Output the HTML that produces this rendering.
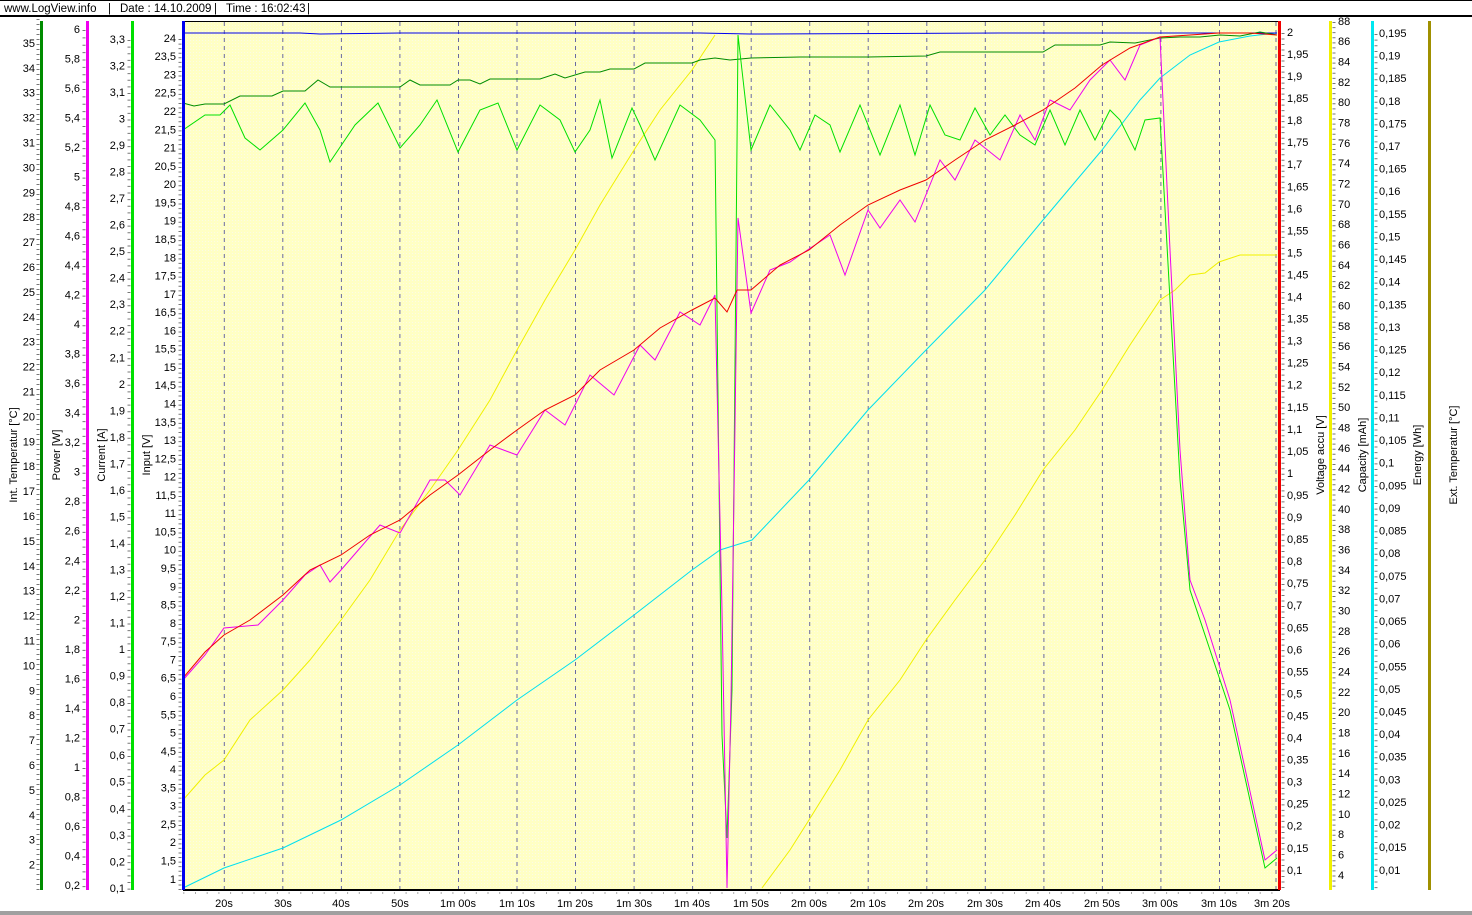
<!DOCTYPE html>
<html><head><meta charset="utf-8"><style>
html,body{margin:0;padding:0;background:#fff;width:1472px;height:915px;overflow:hidden}
svg{display:block;font-family:"Liberation Sans",Arial,sans-serif;font-size:11px}
</style></head><body>
<svg width="1472" height="915" viewBox="0 0 1472 915" xmlns="http://www.w3.org/2000/svg">
<defs>
<pattern id="dots" width="3" height="3" patternUnits="userSpaceOnUse">
<rect width="3" height="3" fill="#ffffc4"/><rect x="1" y="1" width="1" height="1" fill="#fbfbe6"/>
</pattern>
</defs>
<rect x="0" y="0" width="1472" height="1" fill="#000"/>
<g font-size="11.5">
<text x="4" y="12">www.LogView.info</text><text x="108" y="12">|</text><text x="120" y="12">Date : 14.10.2009</text><text x="214" y="12">|</text><text x="226" y="12">Time : 16:02:43</text><text x="307" y="12">|</text>
</g>
<rect x="0" y="15" width="1472" height="2" fill="#000"/>
<rect x="0" y="911" width="1472" height="4" fill="#a0a0a0"/>
<rect x="183" y="21" width="1097" height="869" fill="url(#dots)"/>
<line x1="183" y1="21.5" x2="1280" y2="21.5" stroke="#000"/>
<g stroke="#6a6aa0" stroke-dasharray="4,4" stroke-width="1">
<line x1="224.3" y1="22" x2="224.3" y2="890"/><line x1="282.8" y1="22" x2="282.8" y2="890"/><line x1="341.4" y1="22" x2="341.4" y2="890"/><line x1="399.9" y1="22" x2="399.9" y2="890"/><line x1="458.5" y1="22" x2="458.5" y2="890"/><line x1="517" y1="22" x2="517" y2="890"/><line x1="575.5" y1="22" x2="575.5" y2="890"/><line x1="634.1" y1="22" x2="634.1" y2="890"/><line x1="692.6" y1="22" x2="692.6" y2="890"/><line x1="751.2" y1="22" x2="751.2" y2="890"/><line x1="809.7" y1="22" x2="809.7" y2="890"/><line x1="868.2" y1="22" x2="868.2" y2="890"/><line x1="926.8" y1="22" x2="926.8" y2="890"/><line x1="985.3" y1="22" x2="985.3" y2="890"/><line x1="1043.9" y1="22" x2="1043.9" y2="890"/><line x1="1102.4" y1="22" x2="1102.4" y2="890"/><line x1="1160.9" y1="22" x2="1160.9" y2="890"/><line x1="1219.5" y1="22" x2="1219.5" y2="890"/><line x1="1276" y1="22" x2="1276" y2="890"/>
</g>
<g fill="none" stroke-width="1">
<polyline stroke="#00e0f0" points="183,888 224,868 283,848 341,820 400,785 458,745 517,700 575,660 634,615 692,570 720,550 752,540 809,480 868,410 926,350 985,290 1043,220 1102,150 1140,100 1160,78 1190,55 1219,42 1250,36 1277,33"/>
<polyline stroke="#f0f000" points="183,800 205,775 224,760 250,720 283,690 310,660 341,620 370,580 400,530 430,490 458,450 490,400 517,350 545,300 575,250 600,205 634,150 660,110 692,70 715,35"/>
<polyline stroke="#f0f000" points="762,888 790,850 809,820 840,770 868,720 900,680 926,640 955,600 985,560 1015,515 1043,470 1075,430 1102,390 1130,345 1160,300 1175,290 1190,275 1205,273 1219,262 1240,255 1277,255"/>
<polyline stroke="#0000f0" points="183,33 300,33 320,34 400,33 700,33 750,34 1000,33 1277,33"/>
<polyline stroke="#008c00" points="183,103 194,106 205,104 224,104 240,96 272,96 283,91 305,91 318,80 330,87 400,87 410,80 420,85 450,85 458,80 470,80 480,84 490,79 540,79 555,74 565,78 585,72 600,72 610,69 634,69 645,63 692,63 700,60 715,58 730,60 751,58 800,57 868,57 926,56 940,52 1043,52 1055,45 1100,45 1110,42 1135,43 1160,38 1180,37 1200,37 1220,35 1240,36 1260,32 1277,35"/>
<polyline stroke="#00e000" points="183,130 205,115 220,115 230,105 245,138 260,150 283,130 305,103 320,130 330,162 355,125 378,103 400,148 420,125 437,100 458,152 480,110 498,103 517,150 540,105 560,120 575,152 590,130 600,100 612,158 632,108 640,125 655,160 680,105 700,120 715,140 722,735 727,838 732,690 738,35 751,150 770,105 790,130 800,150 815,115 830,125 840,152 860,105 880,155 900,105 915,155 930,105 945,135 960,140 975,108 990,135 1005,115 1020,135 1035,145 1050,110 1065,145 1080,110 1095,140 1110,110 1120,120 1135,150 1145,120 1160,118 1170,300 1180,480 1190,590 1210,650 1230,710 1265,868 1277,858"/>
<polyline stroke="#f000f0" points="183,680 205,655 224,628 258,625 283,600 305,575 320,565 330,582 341,570 380,525 400,533 430,480 445,480 460,495 490,445 517,455 545,410 565,425 590,375 614,395 640,345 655,360 680,312 700,325 715,295 722,610 727,888 731,700 738,218 751,313 770,270 790,262 800,255 830,235 845,275 868,210 880,228 900,200 915,222 940,160 955,180 975,140 1000,160 1020,115 1035,140 1050,100 1070,110 1090,80 1110,60 1125,80 1140,45 1160,37 1170,250 1180,450 1190,580 1205,620 1230,700 1265,860 1277,850"/>
<polyline stroke="#f00000" points="183,678 205,652 224,635 250,620 283,595 310,570 341,555 370,535 400,520 430,495 458,475 490,450 517,430 545,410 575,395 600,370 634,350 660,328 692,310 715,298 727,312 737,290 751,290 780,265 809,250 840,225 868,205 900,190 926,180 955,160 985,140 1015,125 1043,110 1075,88 1102,65 1130,48 1160,37 1190,35 1219,33 1250,33 1277,35"/>
</g>
<rect x="183" y="889" width="1097" height="2" fill="#000"/>
<line x1="183" y1="893" x2="1280" y2="893" stroke="#555" stroke-dasharray="1,10.7" stroke-dashoffset="-0.3"/>
<g text-anchor="middle">
<text x="224" y="907">20s</text><text x="283" y="907">30s</text><text x="341" y="907">40s</text><text x="400" y="907">50s</text><text x="458" y="907">1m 00s</text><text x="517" y="907">1m 10s</text><text x="575" y="907">1m 20s</text><text x="634" y="907">1m 30s</text><text x="692" y="907">1m 40s</text><text x="751" y="907">1m 50s</text><text x="809" y="907">2m 00s</text><text x="868" y="907">2m 10s</text><text x="926" y="907">2m 20s</text><text x="985" y="907">2m 30s</text><text x="1043" y="907">2m 40s</text><text x="1102" y="907">2m 50s</text><text x="1160" y="907">3m 00s</text><text x="1219" y="907">3m 10s</text><text x="1272" y="907">3m 20s</text>
</g>
<rect x="40" y="21" width="3" height="869" fill="#008c00"/>
<rect x="86" y="21" width="3" height="869" fill="#f000f0"/>
<rect x="131" y="21" width="3" height="869" fill="#00e000"/>
<rect x="182" y="21" width="3" height="869" fill="#0000f0"/>
<rect x="1278" y="21" width="3" height="869" fill="#f00000"/>
<rect x="1329" y="21" width="3" height="869" fill="#f0f000"/>
<rect x="1371" y="21" width="3" height="869" fill="#00e8f0"/>
<rect x="1428" y="21" width="3" height="869" fill="#a09000"/>
<g stroke="#777" stroke-width="3">
<line x1="38" y1="19" x2="38" y2="890" stroke-dasharray="1,4"/>
<line x1="84" y1="30" x2="84" y2="890" stroke-dasharray="1,6.38"/>
<line x1="129" y1="40" x2="129" y2="890" stroke-dasharray="1,5.63"/>
<line x1="180" y1="39" x2="180" y2="890" stroke-dasharray="1,3.57"/>
<line x1="1283" y1="33" x2="1283" y2="890" stroke-dasharray="1,4.51"/>
<line x1="1334" y1="22" x2="1334" y2="890" stroke-dasharray="1,4.08"/>
<line x1="1376" y1="34" x2="1376" y2="890" stroke-dasharray="1,4.65"/>
</g>
<g text-anchor="end" dominant-baseline="middle">
<text x="35" y="44">35</text><text x="35" y="68.9">34</text><text x="35" y="93.8">33</text><text x="35" y="118.7">32</text><text x="35" y="143.6">31</text><text x="35" y="168.5">30</text><text x="35" y="193.4">29</text><text x="35" y="218.3">28</text><text x="35" y="243.2">27</text><text x="35" y="268.1">26</text><text x="35" y="293">25</text><text x="35" y="317.9">24</text><text x="35" y="342.8">23</text><text x="35" y="367.7">22</text><text x="35" y="392.6">21</text><text x="35" y="417.5">20</text><text x="35" y="442.4">19</text><text x="35" y="467.3">18</text><text x="35" y="492.2">17</text><text x="35" y="517.1">16</text><text x="35" y="542">15</text><text x="35" y="566.9">14</text><text x="35" y="591.8">13</text><text x="35" y="616.7">12</text><text x="35" y="641.6">11</text><text x="35" y="666.5">10</text><text x="35" y="691.4">9</text><text x="35" y="716.3">8</text><text x="35" y="741.2">7</text><text x="35" y="766.1">6</text><text x="35" y="791">5</text><text x="35" y="815.9">4</text><text x="35" y="840.8">3</text><text x="35" y="865.7">2</text>
</g>
<g text-anchor="end" dominant-baseline="middle">
<text x="80" y="30">6</text><text x="80" y="59.5">5,8</text><text x="80" y="89">5,6</text><text x="80" y="118.6">5,4</text><text x="80" y="148.1">5,2</text><text x="80" y="177.6">5</text><text x="80" y="207.1">4,8</text><text x="80" y="236.6">4,6</text><text x="80" y="266.2">4,4</text><text x="80" y="295.7">4,2</text><text x="80" y="325.2">4</text><text x="80" y="354.7">3,8</text><text x="80" y="384.2">3,6</text><text x="80" y="413.8">3,4</text><text x="80" y="443.3">3,2</text><text x="80" y="472.8">3</text><text x="80" y="502.3">2,8</text><text x="80" y="531.8">2,6</text><text x="80" y="561.4">2,4</text><text x="80" y="590.9">2,2</text><text x="80" y="620.4">2</text><text x="80" y="649.9">1,8</text><text x="80" y="679.4">1,6</text><text x="80" y="709">1,4</text><text x="80" y="738.5">1,2</text><text x="80" y="768">1</text><text x="80" y="797.5">0,8</text><text x="80" y="827">0,6</text><text x="80" y="856.6">0,4</text><text x="80" y="886">0,2</text>
</g>
<g text-anchor="end" dominant-baseline="middle">
<text x="125" y="40">3,3</text><text x="125" y="66.5">3,2</text><text x="125" y="93.1">3,1</text><text x="125" y="119.6">3</text><text x="125" y="146.1">2,9</text><text x="125" y="172.7">2,8</text><text x="125" y="199.2">2,7</text><text x="125" y="225.7">2,6</text><text x="125" y="252.2">2,5</text><text x="125" y="278.8">2,4</text><text x="125" y="305.3">2,3</text><text x="125" y="331.8">2,2</text><text x="125" y="358.4">2,1</text><text x="125" y="384.9">2</text><text x="125" y="411.4">1,9</text><text x="125" y="438">1,8</text><text x="125" y="464.5">1,7</text><text x="125" y="491">1,6</text><text x="125" y="517.5">1,5</text><text x="125" y="544.1">1,4</text><text x="125" y="570.6">1,3</text><text x="125" y="597.1">1,2</text><text x="125" y="623.7">1,1</text><text x="125" y="650.2">1</text><text x="125" y="676.7">0,9</text><text x="125" y="703.3">0,8</text><text x="125" y="729.8">0,7</text><text x="125" y="756.3">0,6</text><text x="125" y="782.8">0,5</text><text x="125" y="809.4">0,4</text><text x="125" y="835.9">0,3</text><text x="125" y="862.4">0,2</text><text x="125" y="889">0,1</text>
</g>
<g text-anchor="end" dominant-baseline="middle">
<text x="176" y="39">24</text><text x="176" y="57.3">23,5</text><text x="176" y="75.6">23</text><text x="176" y="93.8">22,5</text><text x="176" y="112.1">22</text><text x="176" y="130.4">21,5</text><text x="176" y="148.7">21</text><text x="176" y="167">20,5</text><text x="176" y="185.2">20</text><text x="176" y="203.5">19,5</text><text x="176" y="221.8">19</text><text x="176" y="240.1">18,5</text><text x="176" y="258.4">18</text><text x="176" y="276.6">17,5</text><text x="176" y="294.9">17</text><text x="176" y="313.2">16,5</text><text x="176" y="331.5">16</text><text x="176" y="349.8">15,5</text><text x="176" y="368">15</text><text x="176" y="386.3">14,5</text><text x="176" y="404.6">14</text><text x="176" y="422.9">13,5</text><text x="176" y="441.2">13</text><text x="176" y="459.4">12,5</text><text x="176" y="477.7">12</text><text x="176" y="496">11,5</text><text x="176" y="514.3">11</text><text x="176" y="532.6">10,5</text><text x="176" y="550.8">10</text><text x="176" y="569.1">9,5</text><text x="176" y="587.4">9</text><text x="176" y="605.7">8,5</text><text x="176" y="624">8</text><text x="176" y="642.2">7,5</text><text x="176" y="660.5">7</text><text x="176" y="678.8">6,5</text><text x="176" y="697.1">6</text><text x="176" y="715.4">5,5</text><text x="176" y="733.6">5</text><text x="176" y="751.9">4,5</text><text x="176" y="770.2">4</text><text x="176" y="788.5">3,5</text><text x="176" y="806.8">3</text><text x="176" y="825">2,5</text><text x="176" y="843.3">2</text><text x="176" y="861.6">1,5</text><text x="176" y="879.9">1</text>
</g>
<g dominant-baseline="middle">
<text x="1287" y="33">2</text><text x="1287" y="55.1">1,95</text><text x="1287" y="77.1">1,9</text><text x="1287" y="99.2">1,85</text><text x="1287" y="121.2">1,8</text><text x="1287" y="143.3">1,75</text><text x="1287" y="165.3">1,7</text><text x="1287" y="187.4">1,65</text><text x="1287" y="209.4">1,6</text><text x="1287" y="231.5">1,55</text><text x="1287" y="253.5">1,5</text><text x="1287" y="275.6">1,45</text><text x="1287" y="297.6">1,4</text><text x="1287" y="319.7">1,35</text><text x="1287" y="341.7">1,3</text><text x="1287" y="363.8">1,25</text><text x="1287" y="385.8">1,2</text><text x="1287" y="407.9">1,15</text><text x="1287" y="429.9">1,1</text><text x="1287" y="452">1,05</text><text x="1287" y="474">1</text><text x="1287" y="496.1">0,95</text><text x="1287" y="518.1">0,9</text><text x="1287" y="540.2">0,85</text><text x="1287" y="562.2">0,8</text><text x="1287" y="584.3">0,75</text><text x="1287" y="606.3">0,7</text><text x="1287" y="628.4">0,65</text><text x="1287" y="650.4">0,6</text><text x="1287" y="672.5">0,55</text><text x="1287" y="694.5">0,5</text><text x="1287" y="716.6">0,45</text><text x="1287" y="738.6">0,4</text><text x="1287" y="760.7">0,35</text><text x="1287" y="782.7">0,3</text><text x="1287" y="804.8">0,25</text><text x="1287" y="826.8">0,2</text><text x="1287" y="848.9">0,15</text><text x="1287" y="871">0,1</text>
</g>
<g dominant-baseline="middle">
<text x="1338" y="22">88</text><text x="1338" y="42.3">86</text><text x="1338" y="62.7">84</text><text x="1338" y="83">82</text><text x="1338" y="103.3">80</text><text x="1338" y="123.7">78</text><text x="1338" y="144">76</text><text x="1338" y="164.3">74</text><text x="1338" y="184.6">72</text><text x="1338" y="205">70</text><text x="1338" y="225.3">68</text><text x="1338" y="245.6">66</text><text x="1338" y="266">64</text><text x="1338" y="286.3">62</text><text x="1338" y="306.6">60</text><text x="1338" y="327">58</text><text x="1338" y="347.3">56</text><text x="1338" y="367.6">54</text><text x="1338" y="387.9">52</text><text x="1338" y="408.3">50</text><text x="1338" y="428.6">48</text><text x="1338" y="448.9">46</text><text x="1338" y="469.3">44</text><text x="1338" y="489.6">42</text><text x="1338" y="509.9">40</text><text x="1338" y="530.3">38</text><text x="1338" y="550.6">36</text><text x="1338" y="570.9">34</text><text x="1338" y="591.2">32</text><text x="1338" y="611.6">30</text><text x="1338" y="631.9">28</text><text x="1338" y="652.2">26</text><text x="1338" y="672.6">24</text><text x="1338" y="692.9">22</text><text x="1338" y="713.2">20</text><text x="1338" y="733.6">18</text><text x="1338" y="753.9">16</text><text x="1338" y="774.2">14</text><text x="1338" y="794.5">12</text><text x="1338" y="814.9">10</text><text x="1338" y="835.2">8</text><text x="1338" y="855.5">6</text><text x="1338" y="876">4</text>
</g>
<g dominant-baseline="middle">
<text x="1379" y="34">0,195</text><text x="1379" y="56.6">0,19</text><text x="1379" y="79.2">0,185</text><text x="1379" y="101.9">0,18</text><text x="1379" y="124.5">0,175</text><text x="1379" y="147.1">0,17</text><text x="1379" y="169.7">0,165</text><text x="1379" y="192.3">0,16</text><text x="1379" y="215">0,155</text><text x="1379" y="237.6">0,15</text><text x="1379" y="260.2">0,145</text><text x="1379" y="282.8">0,14</text><text x="1379" y="305.4">0,135</text><text x="1379" y="328.1">0,13</text><text x="1379" y="350.7">0,125</text><text x="1379" y="373.3">0,12</text><text x="1379" y="395.9">0,115</text><text x="1379" y="418.5">0,11</text><text x="1379" y="441.2">0,105</text><text x="1379" y="463.8">0,1</text><text x="1379" y="486.4">0,095</text><text x="1379" y="509">0,09</text><text x="1379" y="531.6">0,085</text><text x="1379" y="554.3">0,08</text><text x="1379" y="576.9">0,075</text><text x="1379" y="599.5">0,07</text><text x="1379" y="622.1">0,065</text><text x="1379" y="644.7">0,06</text><text x="1379" y="667.4">0,055</text><text x="1379" y="690">0,05</text><text x="1379" y="712.6">0,045</text><text x="1379" y="735.2">0,04</text><text x="1379" y="757.8">0,035</text><text x="1379" y="780.5">0,03</text><text x="1379" y="803.1">0,025</text><text x="1379" y="825.7">0,02</text><text x="1379" y="848.3">0,015</text><text x="1379" y="871">0,01</text>
</g>
<g text-anchor="middle">
<text transform="translate(17,455) rotate(-90)">Int. Temperatur [°C]</text>
<text transform="translate(60,455) rotate(-90)">Power [W]</text>
<text transform="translate(105,455) rotate(-90)">Current [A]</text>
<text transform="translate(150,455) rotate(-90)">Input [V]</text>
<text transform="translate(1324,455) rotate(-90)">Voltage accu [V]</text>
<text transform="translate(1366,455) rotate(-90)">Capacity [mAh]</text>
<text transform="translate(1421,455) rotate(-90)">Energy [Wh]</text>
<text transform="translate(1457,455) rotate(-90)">Ext. Temperatur [°C]</text>
</g>
</svg>
</body></html>
